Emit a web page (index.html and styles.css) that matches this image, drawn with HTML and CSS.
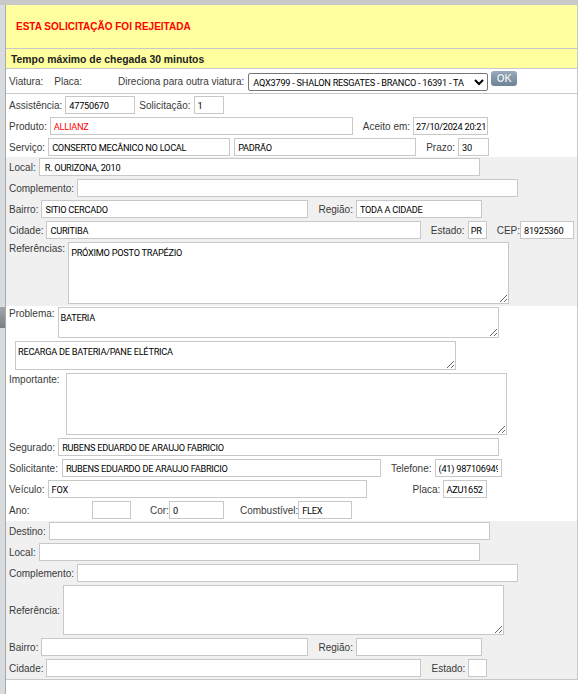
FILE: index.html
```html
<!DOCTYPE html>
<html lang="pt-BR">
<head>
    <meta charset="UTF-8">
    <meta name="viewport" content="width=device-width, initial-scale=1.0">
    <title>Solicitação</title>
    <link rel="stylesheet" href="styles.css">
</head>
<body>
    <div class="topbar"></div>

    <div class="page">
        <div class="side"><span class="thumb"></span></div>

        <form class="sheet">
            <div class="alert">ESTA SOLICITAÇÃO FOI REJEITADA</div>
            <div class="deadline">Tempo máximo de chegada 30 minutos</div>

            <div class="vehicle">
                <label class="lbl">Viatura:</label>
                <label class="lbl gap8">Placa:</label>
                <label class="lbl gap33">Direciona para outra viatura:</label>
                <select class="combo">
                    <option>AQX3799 - SHALON RESGATES - BRANCO - 16391 - TA</option>
                </select>
                <button type="button" class="ok">OK</button>
            </div>

            <!-- dados da assistencia -->
            <div class="section first">
                <div class="row">
                    <label class="lbl">Assistência:</label>
                    <input class="inp w70" type="text" value="47750670" readonly>
                    <label class="lbl gap4">Solicitação:</label>
                    <input class="inp w30" type="text" value="1" readonly>
                </div>
                <div class="row">
                    <label class="lbl">Produto:</label>
                    <input class="inp w303 red" type="text" value="ALLIANZ" readonly>
                    <label class="lbl gap10">Aceito em:</label>
                    <input class="inp w75 snug" type="text" value="27/10/2024 20:21" readonly>
                </div>
                <div class="row">
                    <label class="lbl">Serviço:</label>
                    <input class="inp w182" type="text" value="CONSERTO MECÂNICO NO LOCAL" readonly>
                    <input class="inp w182 gap4" type="text" value="PADRÃO" readonly>
                    <label class="lbl gap10">Prazo:</label>
                    <input class="inp w31" type="text" value="30" readonly>
                </div>
            </div>

            <!-- endereco de origem -->
            <div class="section gray">
                <div class="row">
                    <label class="lbl">Local:</label>
                    <input class="inp w441" type="text" value=" R. OURIZONA, 2010" readonly>
                </div>
                <div class="row">
                    <label class="lbl">Complemento:</label>
                    <input class="inp w441" type="text" readonly>
                </div>
                <div class="row">
                    <label class="lbl">Bairro:</label>
                    <input class="inp w267" type="text" value="SITIO CERCADO" readonly>
                    <label class="lbl gap10">Região:</label>
                    <input class="inp w126" type="text" value="TODA A CIDADE" readonly>
                </div>
                <div class="row">
                    <label class="lbl">Cidade:</label>
                    <input class="inp w375" type="text" value="CURITIBA" readonly>
                    <label class="lbl gap10">Estado:</label>
                    <input class="inp w19 snug" type="text" value="PR" readonly>
                    <label class="lbl gap10 tight">CEP:</label>
                    <input class="inp w54" type="text" value="81925360" readonly>
                </div>
                <div class="row top">
                    <label class="lbl">Referências:</label>
                    <textarea class="txt h62" readonly>PRÓXIMO POSTO TRAPÉZIO</textarea>
                </div>
            </div>

            <!-- problema e cliente -->
            <div class="section">
                <div class="row top">
                    <label class="lbl">Problema:</label>
                    <textarea class="txt h31" readonly>BATERIA</textarea>
                </div>
                <div class="row top">
                    <textarea class="txt h29 gap6" readonly>RECARGA DE BATERIA/PANE ELÉTRICA</textarea>
                </div>
                <div class="row top">
                    <label class="lbl">Importante:</label>
                    <textarea class="txt h62 gap3" readonly></textarea>
                </div>
                <div class="row">
                    <label class="lbl">Segurado:</label>
                    <input class="inp w441" type="text" value="RUBENS EDUARDO DE ARAUJO FABRICIO" readonly>
                </div>
                <div class="row">
                    <label class="lbl">Solicitante:</label>
                    <input class="inp w319 gap1" type="text" value="RUBENS EDUARDO DE ARAUJO FABRICIO" readonly>
                    <label class="lbl gap10">Telefone:</label>
                    <input class="inp w67" type="text" value="(41) 987106949" readonly>
                </div>
                <div class="row">
                    <label class="lbl">Veículo:</label>
                    <input class="inp w319" type="text" value="FOX" readonly>
                    <label class="lbl gap46">Placa:</label>
                    <input class="inp w44 snug" type="text" value="AZU1652" readonly>
                </div>
                <div class="row">
                    <label class="lbl year">Ano:</label>
                    <input class="inp w39" type="text" readonly>
                    <label class="lbl gap19 tight">Cor:</label>
                    <input class="inp w55" type="text" value="0" readonly>
                    <label class="lbl gap16 tight">Combustível:</label>
                    <input class="inp w54" type="text" value="FLEX" readonly>
                </div>
            </div>

            <!-- destino -->
            <div class="section gray">
                <div class="row">
                    <label class="lbl">Destino:</label>
                    <input class="inp w441" type="text" readonly>
                </div>
                <div class="row">
                    <label class="lbl">Local:</label>
                    <input class="inp w441" type="text" readonly>
                </div>
                <div class="row">
                    <label class="lbl">Complemento:</label>
                    <input class="inp w441" type="text" readonly>
                </div>
                <div class="row">
                    <label class="lbl">Referência:</label>
                    <textarea class="txt h50" readonly></textarea>
                </div>
                <div class="row">
                    <label class="lbl">Bairro:</label>
                    <input class="inp w267" type="text" readonly>
                    <label class="lbl gap10">Região:</label>
                    <input class="inp w126" type="text" readonly>
                </div>
                <div class="row">
                    <label class="lbl">Cidade:</label>
                    <input class="inp w375" type="text" readonly>
                    <label class="lbl gap10">Estado:</label>
                    <input class="inp w19" type="text" readonly>
                </div>
            </div>
        </form>
    </div>
</body>
</html>
```

FILE: styles.css
```css
* {
    box-sizing: border-box;
}

body {
    margin: 0;
    font-family: "Liberation Sans", Arial, sans-serif;
    font-size: 10px;
    color: #3a3a3a;
    background: #fff;
}

.topbar {
    height: 5px;
    background: #c9c9c9;
}

.page {
    display: flex;
    min-height: calc(100vh - 5px);
}

.side {
    position: relative;
    width: 6px;
    background: #d9dcdf;
    border-right: 1px solid #a6aaae;
}

.side .thumb {
    position: absolute;
    left: 0;
    top: 302px;
    width: 5px;
    height: 21px;
    background: linear-gradient(#a3a7ab, #7b7f83);
}

.sheet {
    width: 572px;
    align-self: flex-start;
    border-right: 1px solid #c8c8c8;
    border-bottom: 1px solid #c8c8c8;
}

.alert {
    display: flex;
    align-items: center;
    height: 44px;
    padding-left: 10px;
    background: #ffff9f;
    border-bottom: 1px solid #c8c8c8;
    color: #f00;
    font-weight: bold;
}

.deadline {
    display: flex;
    align-items: center;
    height: 20px;
    padding: 1px 0 0 5px;
    background: #ffff9f;
    border-bottom: 1px solid #c8c8c8;
    color: #222;
    font-weight: bold;
    font-size: 10.4px;
}

.vehicle {
    display: flex;
    align-items: center;
    height: 25px;
    padding-left: 3px;
    border-bottom: 1px solid #c8c8c8;
}

.section {
    display: flex;
    flex-direction: column;
    gap: 3px;
    padding: 1px 3px 2px;
}

.section.first {
    padding: 2px 3px 1px;
}

.section.gray {
    background: #f0f0f0;
}

.row {
    display: flex;
    align-items: center;
    min-height: 18px;
}

.row.top {
    align-items: flex-start;
}

.row.top .lbl {
    padding-top: 1px;
}

.lbl {
    margin-right: 3px;
    white-space: nowrap;
}

.lbl.tight {
    margin-right: 0;
}

.lbl.year {
    min-width: 80px;
}

.inp, .txt {
    border: 1px solid #c8c8c8;
    background: #fff;
    color: #000;
    font-family: Roboto, "Liberation Sans", Arial, sans-serif;
    font-size: 9.2px;
    letter-spacing: -0.25px;
    outline: none;
}

.inp {
    height: 18px;
    padding: 0 3px;
}

.inp.snug {
    padding: 0 2px;
}

.inp.red {
    color: #f00;
}

.txt {
    width: 441px;
    padding: 4px 2px;
    line-height: 11px;
}

.combo {
    width: 240px;
    height: 18px;
    margin: 2px 0 0 1px;
    border: 1px solid #767676;
    border-radius: 2px;
    background: #fff;
    color: #000;
    font-family: Roboto, "Liberation Sans", Arial, sans-serif;
    font-size: 9.2px;
    letter-spacing: -0.25px;
}

.ok {
    align-self: flex-start;
    width: 26px;
    height: 15px;
    margin: 2px 0 0 3px;
    padding: 0;
    border: none;
    border-radius: 3px;
    background: linear-gradient(#9aabbd, #6d8398);
    color: #eef2f6;
    font-family: "Liberation Sans", Arial, sans-serif;
    font-size: 10px;
    font-weight: bold;
    text-shadow: 0 0 1px #4b5b6b;
    cursor: pointer;
}

/* larguras dos campos */
.w19 { width: 19px; }
.w30 { width: 30px; }
.w31 { width: 31px; }
.w39 { width: 39px; }
.w44 { width: 44px; }
.w54 { width: 54px; }
.w55 { width: 55px; }
.w67 { width: 67px; }
.w70 { width: 70px; }
.w75 { width: 75px; }
.w126 { width: 126px; }
.w182 { width: 182px; }
.w267 { width: 267px; }
.w303 { width: 303px; }
.w319 { width: 319px; }
.w375 { width: 375px; }
.w441 { width: 441px; }

.h29 { height: 29px; }
.h31 { height: 31px; }
.h50 { height: 50px; }
.h62 { height: 62px; }

/* espacos entre campos */
.gap1 { margin-left: 1px; }
.gap3 { margin-left: 3px; }
.gap4 { margin-left: 4px; }
.gap6 { margin-left: 6px; }
.gap8 { margin-left: 8px; }
.gap10 { margin-left: 10px; }
.gap16 { margin-left: 16px; }
.gap19 { margin-left: 19px; }
.gap33 { margin-left: 33px; }
.gap46 { margin-left: 46px; }
```
